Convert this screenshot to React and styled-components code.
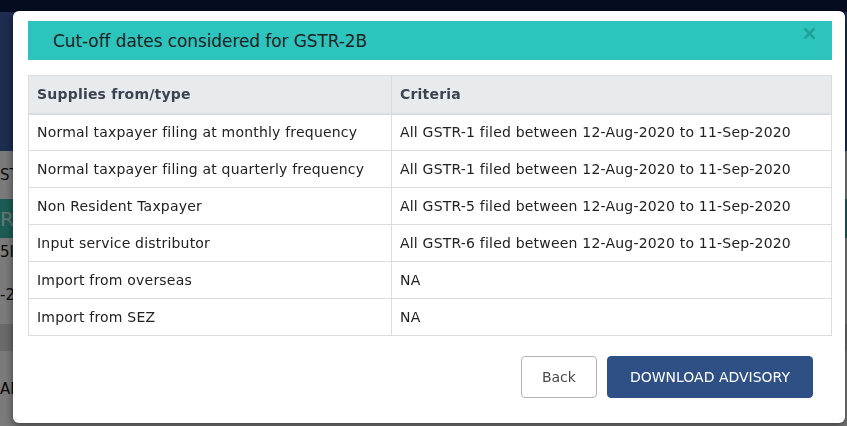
import React from "react";
import styled, { createGlobalStyle } from "styled-components";

const GlobalStyle = createGlobalStyle`
  * { box-sizing: border-box; }
  html, body { margin: 0; padding: 0; }
  body {
    width: 847px;
    height: 426px;
    overflow: hidden;
    font-family: "DejaVu Sans", Verdana, sans-serif;
    background: #808080;
  }
`;

const rows = [
  ["Normal taxpayer filing at monthly frequency", "All GSTR-1 filed between 12-Aug-2020 to 11-Sep-2020"],
  ["Normal taxpayer filing at quarterly frequency", "All GSTR-1 filed between 12-Aug-2020 to 11-Sep-2020"],
  ["Non Resident Taxpayer", "All GSTR-5 filed between 12-Aug-2020 to 11-Sep-2020"],
  ["Input service distributor", "All GSTR-6 filed between 12-Aug-2020 to 11-Sep-2020"],
  ["Import from overseas", "NA"],
  ["Import from SEZ", "NA"],
];

/* page underneath the dialog */
const Page = styled.div`
  display: flex;
  flex-direction: column;
  height: 426px;
  font-size: 15px;
`;

const TopStrip = styled.div`
  height: 12px;
  background: #0a1840;
`;

const Banner = styled.div`
  height: 143px;
  background: #3a5a9e;
`;

const PageRow = styled.div`
  display: flex;
  align-items: center;
  height: ${(p) => p.$h}px;
  background: ${(p) => p.$bg || "#f6f6f6"};
  color: ${(p) => p.$color || "#111"};
  font-size: ${(p) => (p.$big ? 20 : 15)}px;
  white-space: nowrap;
`;

const Backdrop = styled.div`
  position: fixed;
  inset: 0;
  background: rgba(0, 0, 0, 0.5);
  display: flex;
  align-items: flex-start;
  padding: 11px 0 0 13px;
`;

const Modal = styled.div`
  width: 832px;
  height: 412px;
  background: #fff;
  border-radius: 6px;
  padding: 10px 13px 0 15px;
  display: flex;
  flex-direction: column;
  box-shadow: 0 3px 9px rgba(0, 0, 0, 0.5);
`;

const Header = styled.div`
  height: 39px;
  background: #2cc4bc;
  display: flex;
  align-items: center;
  justify-content: space-between;
  padding: 0 16px 0 25px;
`;

const Title = styled.h4`
  margin: 0;
  font-weight: normal;
  font-size: 17px;
  color: #222;
  letter-spacing: -0.1px;
`;

const Close = styled.button`
  border: 0;
  background: none;
  padding: 0;
  margin-top: -14px;
  color: #1fa398;
  cursor: pointer;
  display: flex;
`;

const Table = styled.table`
  margin-top: 15px;
  width: 804px;
  border-collapse: collapse;
  font-size: 14px;
  letter-spacing: 0.2px;
  color: #222;
`;

const Th = styled.th`
  text-align: left;
  height: 38px;
  padding: 0 8px;
  background: #e8ebee;
  color: #3c4350;
  font-weight: bold;
  border: 1px solid #dcdcdc;
  border-bottom: 2px solid #dcdcdc;
  width: ${(p) => p.$w || "auto"};
`;

const Td = styled.td`
  height: 37px;
  padding: 0 8px;
  border: 1px solid #dcdcdc;
  white-space: nowrap;
`;

const Footer = styled.div`
  display: flex;
  justify-content: flex-end;
  gap: 10px;
  margin-top: 20px;
  padding-right: 19px;
`;

const Button = styled.button`
  height: 42px;
  padding: 0 ${(p) => (p.$primary ? 22 : 20)}px;
  border-radius: 4px;
  font-family: inherit;
  font-size: 14px;
  cursor: pointer;
  border: 1px solid ${(p) => (p.$primary ? "#2f5084" : "#b3b3b3")};
  background: ${(p) => (p.$primary ? "#2f5084" : "#fff")};
  color: ${(p) => (p.$primary ? "#fff" : "#4a4a4a")};
  text-transform: ${(p) => (p.$primary ? "uppercase" : "none")};
`;

function CloseIcon() {
  return (
    <svg width="13" height="13" viewBox="0 0 13 13">
      <path d="M1.5 1.5 L11.5 11.5 M11.5 1.5 L1.5 11.5" stroke="currentColor" strokeWidth="2.6" />
    </svg>
  );
}

export default function App() {
  return (
    <>
      <GlobalStyle />
      <Page>
        <TopStrip />
        <Banner />
        <PageRow $h={50}>ST</PageRow>
        <PageRow $h={40} $bg="#3ab9ac" $color="#cfeee9" $big>R</PageRow>
        <PageRow $h={28}>5I</PageRow>
        <PageRow $h={60}>-2</PageRow>
        <PageRow $h={28} $bg="#d4d4d4" />
        <PageRow $h={77}>AB</PageRow>
      </Page>
      <Backdrop>
        <Modal>
          <Header>
            <Title>Cut-off dates considered for GSTR-2B</Title>
            <Close aria-label="Close">
              <CloseIcon />
            </Close>
          </Header>
          <Table>
            <thead>
              <tr>
                <Th $w="363px">Supplies from/type</Th>
                <Th>Criteria</Th>
              </tr>
            </thead>
            <tbody>
              {rows.map(([type, criteria]) => (
                <tr key={type}>
                  <Td>{type}</Td>
                  <Td>{criteria}</Td>
                </tr>
              ))}
            </tbody>
          </Table>
          <Footer>
            <Button>Back</Button>
            <Button $primary>Download Advisory</Button>
          </Footer>
        </Modal>
      </Backdrop>
    </>
  );
}
